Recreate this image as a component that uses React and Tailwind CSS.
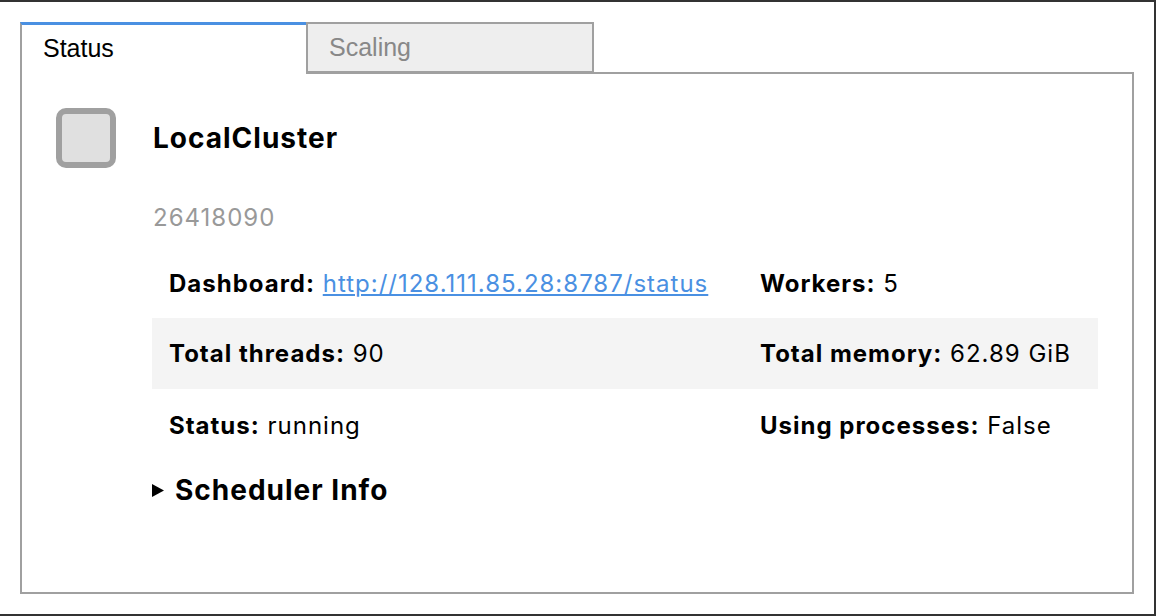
const rows = [
    [
        { label: "Dashboard:", value: "http://128.111.85.28:8787/status", link: true },
        { label: "Workers:", value: "5" },
    ],
    [
        { label: "Total threads:", value: "90" },
        { label: "Total memory:", value: "62.89 GiB" },
    ],
    [
        { label: "Status:", value: "running" },
        { label: "Using processes:", value: "False" },
    ],
];

const Cell = ({ cell, first }) => (
    <div className={first ? "w-[591px] px-[17px]" : "flex-1 px-[17px]"}>
        <span className="font-bold">{cell.label}</span>{" "}
        {cell.link ? (
            <a href="#" className="text-[#4a90e2] underline underline-offset-2">
                {cell.value}
            </a>
        ) : (
            <span>{cell.value}</span>
        )}
    </div>
);

const App = () => {
    return (
        <div
            className="h-[616px] w-[1156px] bg-white border-t-2 border-r-2 border-b-2 border-[#333] p-5 flex flex-col"
            style={{ fontFamily: "Inter, 'Noto Sans', sans-serif" }}
        >
            {/* tabs */}
            <div className="flex h-[50px] relative z-10">
                <div className="w-[286px] h-[52px] bg-white border-l-2 border-[#a0a0a0] border-t-[3px] border-t-[#4a90e2] pl-[21px] pt-[11px] text-[25px] text-black leading-none"
                    style={{ fontFamily: "'Liberation Sans', Arial, sans-serif" }}
                >
                    Status
                </div>
                <div className="w-[288px] h-[51px] bg-[#eeeeee] border-2 border-[#a0a0a0] pl-[21px] pt-[11px] text-[25px] text-[#888] leading-none"
                    style={{ fontFamily: "'Liberation Sans', Arial, sans-serif" }}
                >
                    Scaling
                </div>
            </div>

            {/* panel */}
            <div className="flex-1 border-2 border-[#a0a0a0] pt-[34px] pl-[34px] pr-[34px] tracking-[1px]">
                <div className="flex items-center gap-[37px]">
                    <div className="w-[60px] h-[60px] rounded-[10px] border-[6px] border-[#a0a0a0] bg-[#e0e0e0]" />
                    <div className="text-[28px] font-bold text-black leading-none">LocalCluster</div>
                </div>

                <div className="ml-[96px]">
                    <div className="mt-[38px] text-[24px] text-[#999] leading-none pl-[1px]">26418090</div>

                    <div className="mt-[17px] w-[946px] text-[24px] text-black">
                        {rows.map((row, i) => (
                            <div
                                key={i}
                                className={
                                    i === 1
                                        ? "flex items-center h-[71px] bg-[#f4f4f4]"
                                        : "flex items-center h-[71px] pt-[2px]"
                                }
                            >
                                <Cell cell={row[0]} first />
                                <Cell cell={row[1]} />
                            </div>
                        ))}
                    </div>

                    <div className="mt-[9px] flex items-center text-[28px] font-bold text-black">
                        <svg width="12" height="13" viewBox="0 0 12 13" className="mr-[11px]">
                            <path d="M0 0 L12 6.5 L0 13 Z" fill="black" />
                        </svg>
                        <span>Scheduler Info</span>
                    </div>
                </div>
            </div>
        </div>
    );
};

export default App;
